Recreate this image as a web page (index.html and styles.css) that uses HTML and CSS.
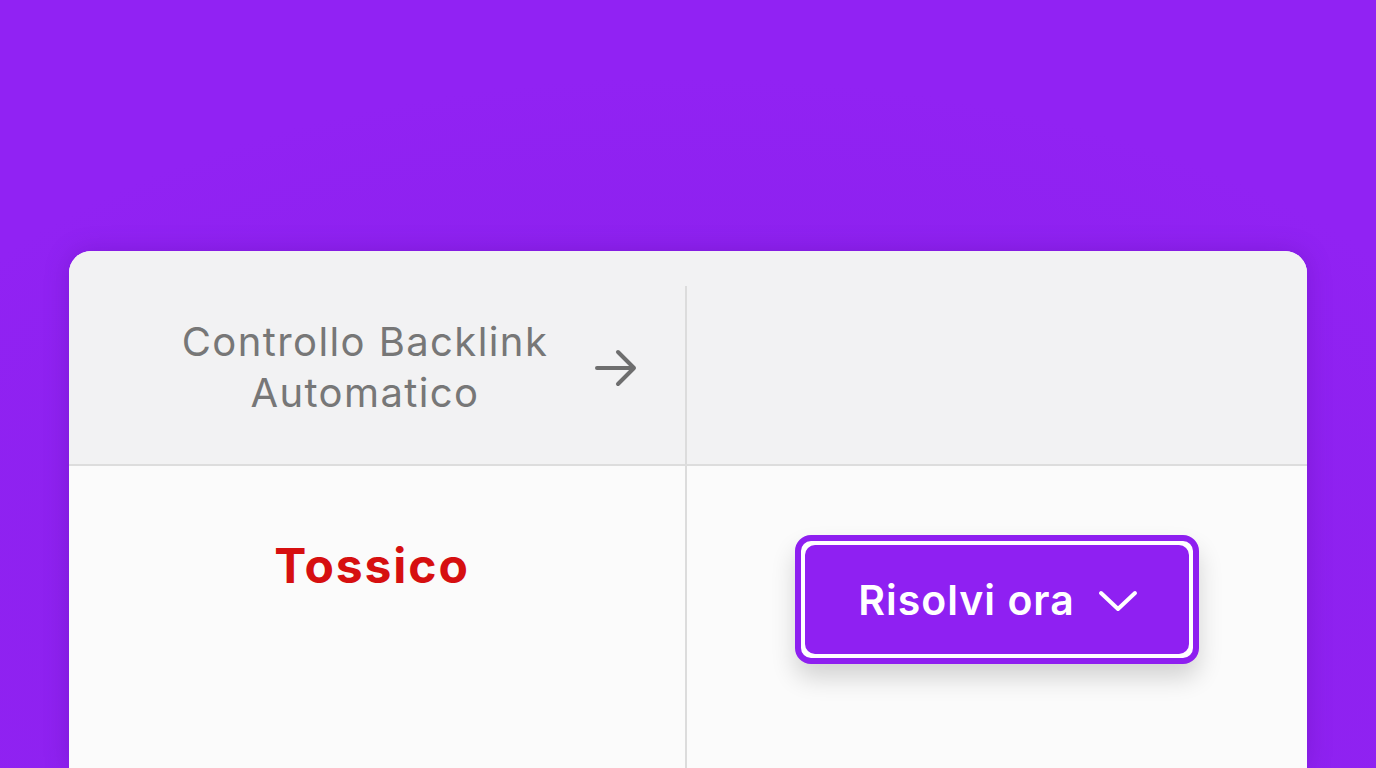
FILE: index.html
```html
<!DOCTYPE html>
<html lang="it">
<head>
<meta charset="utf-8">
<title>Controllo Backlink</title>
<link rel="stylesheet" href="styles.css">
</head>
<body>
<main class="stage">
  <section class="card">
    <div class="head">
      <div class="head-cell head-left">
        <div class="head-title">Controllo Backlink<br>Automatico</div>
        <svg class="arrow" width="46" height="40" viewBox="0 0 46 40" aria-hidden="true">
          <path d="M3 20H40M24 4L40 20L24 36" fill="none" stroke="#6e6e6e" stroke-width="4" stroke-linecap="round" stroke-linejoin="round"/>
        </svg>
      </div>
      <div class="head-cell head-right"></div>
    </div>
    <div class="body">
      <div class="body-cell body-left">
        <span class="status">Tossico</span>
      </div>
      <div class="body-cell body-right">
        <button class="fix-btn" type="button">
          <span class="fix-inner">
            <span class="fix-label">Risolvi ora</span>
            <svg class="chev" width="40" height="24" viewBox="0 0 40 24" aria-hidden="true">
              <path d="M3 4L20 20L37 4" fill="none" stroke="#ffffff" stroke-width="4" stroke-linecap="round" stroke-linejoin="round"/>
            </svg>
          </span>
        </button>
      </div>
    </div>
  </section>
</main>
</body>
</html>
```
FILE: styles.css
```css
* { box-sizing: border-box; }
html, body {
  margin: 0;
  padding: 0;
  height: 100%;
  overflow: hidden;
}
body {
  background: #9021f2;
  font-family: Inter, "Noto Sans", "Liberation Sans", sans-serif;
}
.stage {
  height: 768px;
  padding: 251px 69px 0 69px;
  background: radial-gradient(ellipse 900px 500px at 50% 75%, #8a1fe9 0%, #8d21ee 55%, #9122f3 100%);
}
.card {
  width: 1238px;
  height: 517px;
  border-radius: 22px 22px 0 0;
  overflow: hidden;
  background: #fbfbfb;
  box-shadow: 0 0 24px rgba(70, 0, 140, 0.25);
}
.head {
  display: grid;
  grid-template-columns: 618px 1fr;
  height: 215px;
  padding-top: 35px;
  background: #f2f2f3;
  border-bottom: 2px solid #dddddd;
}
.head-cell { height: 100%; }
.head-left {
  border-right: 2px solid #dcdcdc;
  display: flex;
  align-items: center;
  justify-content: center;
  gap: 46px;
  padding: 0 0 16px 68px;
}
.head-title {
  font-size: 40px;
  line-height: 51px;
  color: #777777;
  text-align: center;
  font-weight: 400;
  letter-spacing: 1.4px;
}
.arrow { flex: none; margin-top: 2px; }
.body {
  display: grid;
  grid-template-columns: 618px 1fr;
  height: 302px;
}
.body-left {
  border-right: 2px solid #dcdcdc;
  display: flex;
  justify-content: center;
  padding: 70px 10px 0 0;
}
.status {
  font-size: 48px;
  line-height: 60px;
  font-weight: 700;
  color: #d60f10;
  letter-spacing: 1.9px;
}
.body-right {
  display: flex;
  justify-content: center;
  padding-top: 69px;
}
.fix-btn {
  width: 404px;
  height: 129px;
  border: 6px solid #8e1ff0;
  border-radius: 16px;
  padding: 0;
  background: #ffffff;
  box-shadow: 0 14px 24px rgba(0, 0, 0, 0.16);
  font-family: inherit;
  cursor: pointer;
  display: flex;
}
.fix-inner {
  flex: 1;
  margin: 4px;
  border-radius: 10px;
  background: #8f20f2;
  display: flex;
  align-items: center;
  justify-content: center;
  gap: 23px;
  padding-left: 2px;
}
.fix-label {
  font-size: 41px;
  font-weight: 600;
  color: #ffffff;
  letter-spacing: 1px;
}
.chev { flex: none; margin-top: 2px; }
```
